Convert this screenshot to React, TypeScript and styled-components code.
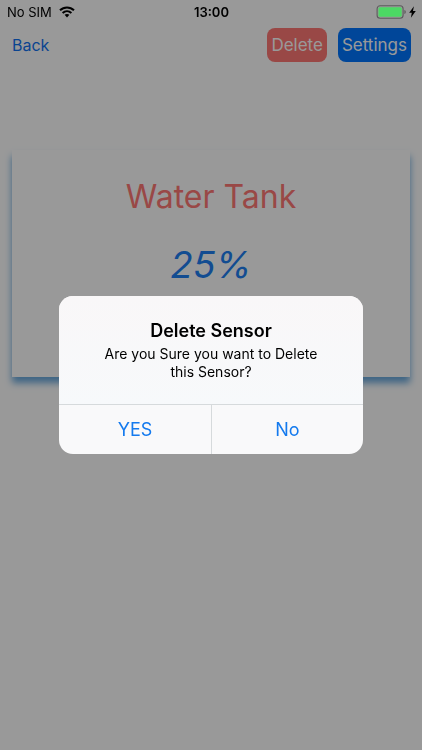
import React from "react";
import styled, { createGlobalStyle } from "styled-components";

const GlobalStyle = createGlobalStyle`
  *, *::before, *::after { box-sizing: border-box; }
  body {
    margin: 0;
    background: #fff;
    color: #000;
    font-family: Inter, "Liberation Sans", sans-serif;
  }
  button { font: inherit; border: 0; padding: 0; cursor: pointer; }
  h1, h2, p { margin: 0; font-weight: 400; }
`;

const Screen = styled.div`
  min-height: 100vh;
  display: flex;
  flex-direction: column;
`;

const StatusBar = styled.header`
  position: relative;
  z-index: 2;
  height: 24px;
  padding: 0 6px 0 7px;
  display: grid;
  grid-template-columns: 1fr auto 1fr;
  align-items: center;
  font-size: 13px;
  line-height: 24px;
`;

const StatusGroup = styled.div<{ $end?: boolean }>`
  display: flex;
  align-items: center;
  justify-content: ${(p) => (p.$end ? "flex-end" : "flex-start")};
  gap: ${(p) => (p.$end ? "3px" : "7px")};
`;

const Clock = styled.time`
  font-weight: 600;
`;

const NavBar = styled.nav`
  display: flex;
  align-items: center;
  gap: 11px;
  padding: 4px 11px 0 12px;
`;

const BackButton = styled.button`
  margin-right: auto;
  background: none;
  color: #1272f0;
  font-size: 16px;
  line-height: 34px;
`;

const NavButton = styled.button<{ $color: string }>`
  height: 34px;
  padding: 0 4px;
  border-radius: 8px;
  background: ${(p) => p.$color};
  color: #fff;
  font-size: 17px;
  line-height: 34px;
`;

const SensorCard = styled.main`
  margin: 88px 12px 0;
  height: 227px;
  padding-top: 23px;
  display: flex;
  flex-direction: column;
  align-items: center;
  gap: 20px;
  background: #fff;
  box-shadow: 0 6px 7px #68a8dc;
`;

const SensorName = styled.h1`
  color: #ff7875;
  font-size: 32px;
  line-height: 48px;
`;

const SensorLevel = styled.p`
  color: #1f7ff2;
  font-size: 37px;
  font-style: italic;
  line-height: 48px;
`;

const Overlay = styled.div`
  position: fixed;
  inset: 0;
  z-index: 1;
  display: flex;
  align-items: center;
  justify-content: center;
  background: rgba(0, 0, 0, 0.4);
`;

const Alert = styled.section`
  width: 304px;
  max-width: 90%;
  border-radius: 14px;
  overflow: hidden;
  background: #f9f9fa;
`;

const AlertBody = styled.div`
  padding: 22px 32px 23px;
  text-align: center;
  background: linear-gradient(#f9f7f8, #f7f9fb);
`;

const AlertTitle = styled.h2`
  font-size: 18px;
  font-weight: 600;
  line-height: 26px;
`;

const AlertMessage = styled.p`
  padding-top: 1px;
  font-size: 14px;
  line-height: 18px;
`;

const AlertActions = styled.div`
  display: grid;
  grid-template-columns: 1fr 1fr;
  border-top: 1px solid #d6dadc;
`;

const AlertButton = styled.button`
  height: 49px;
  background: none;
  color: #147aee;
  font-size: 18px;

  & + & {
    border-left: 1px solid #d6dadc;
  }
`;

const WifiIcon = () => (
  <svg width="16" height="12" viewBox="0 0 16 12" fill="none" stroke="#000" strokeWidth="2" aria-label="Wi-Fi">
    <path d="M1 4.3C5 .4 11 .4 15 4.3" />
    <path d="M3.6 7C6.2 4.6 9.8 4.6 12.4 7" />
    <path d="M5.6 8.8C7 7.6 9 7.6 10.4 8.8L8 11.4Z" fill="#000" stroke="none" />
  </svg>
);

const BatteryIcon = () => (
  <svg width="30" height="14" viewBox="0 0 30 14" aria-label="Battery">
    <rect x="1.1" y="0.8" width="26" height="12.4" rx="3" fill="none" stroke="#5c5c5c" strokeWidth="1.1" />
    <rect x="2.5" y="2.2" width="23.2" height="9.6" rx="1.6" fill="#4cd964" />
    <path d="M28.4 5C30.2 5.5 30.2 8.5 28.4 9Z" fill="#5c5c5c" />
  </svg>
);

const BoltIcon = () => (
  <svg width="7" height="12" viewBox="0 0 7 12" aria-label="Charging">
    <path d="M4.9.2L.2 6.8H2.8L1.9 11.8L6.8 4.9H4Z" fill="#000" />
  </svg>
);

export default function App() {
  return (
    <>
      <GlobalStyle />
      <Screen>
        <StatusBar>
          <StatusGroup>
            <span>No SIM</span>
            <WifiIcon />
          </StatusGroup>
          <Clock>13:00</Clock>
          <StatusGroup $end>
            <BatteryIcon />
            <BoltIcon />
          </StatusGroup>
        </StatusBar>
        <NavBar>
          <BackButton>Back</BackButton>
          <NavButton $color="#ff7875">Delete</NavButton>
          <NavButton $color="#0076ff">Settings</NavButton>
        </NavBar>
        <SensorCard>
          <SensorName>Water Tank</SensorName>
          <SensorLevel>25%</SensorLevel>
        </SensorCard>
      </Screen>
      <Overlay>
        <Alert role="alertdialog" aria-modal="true" aria-labelledby="alert-title" aria-describedby="alert-message">
          <AlertBody>
            <AlertTitle id="alert-title">Delete Sensor</AlertTitle>
            <AlertMessage id="alert-message">Are you Sure you want to Delete this Sensor?</AlertMessage>
          </AlertBody>
          <AlertActions>
            <AlertButton>YES</AlertButton>
            <AlertButton>No</AlertButton>
          </AlertActions>
        </Alert>
      </Overlay>
    </>
  );
}
